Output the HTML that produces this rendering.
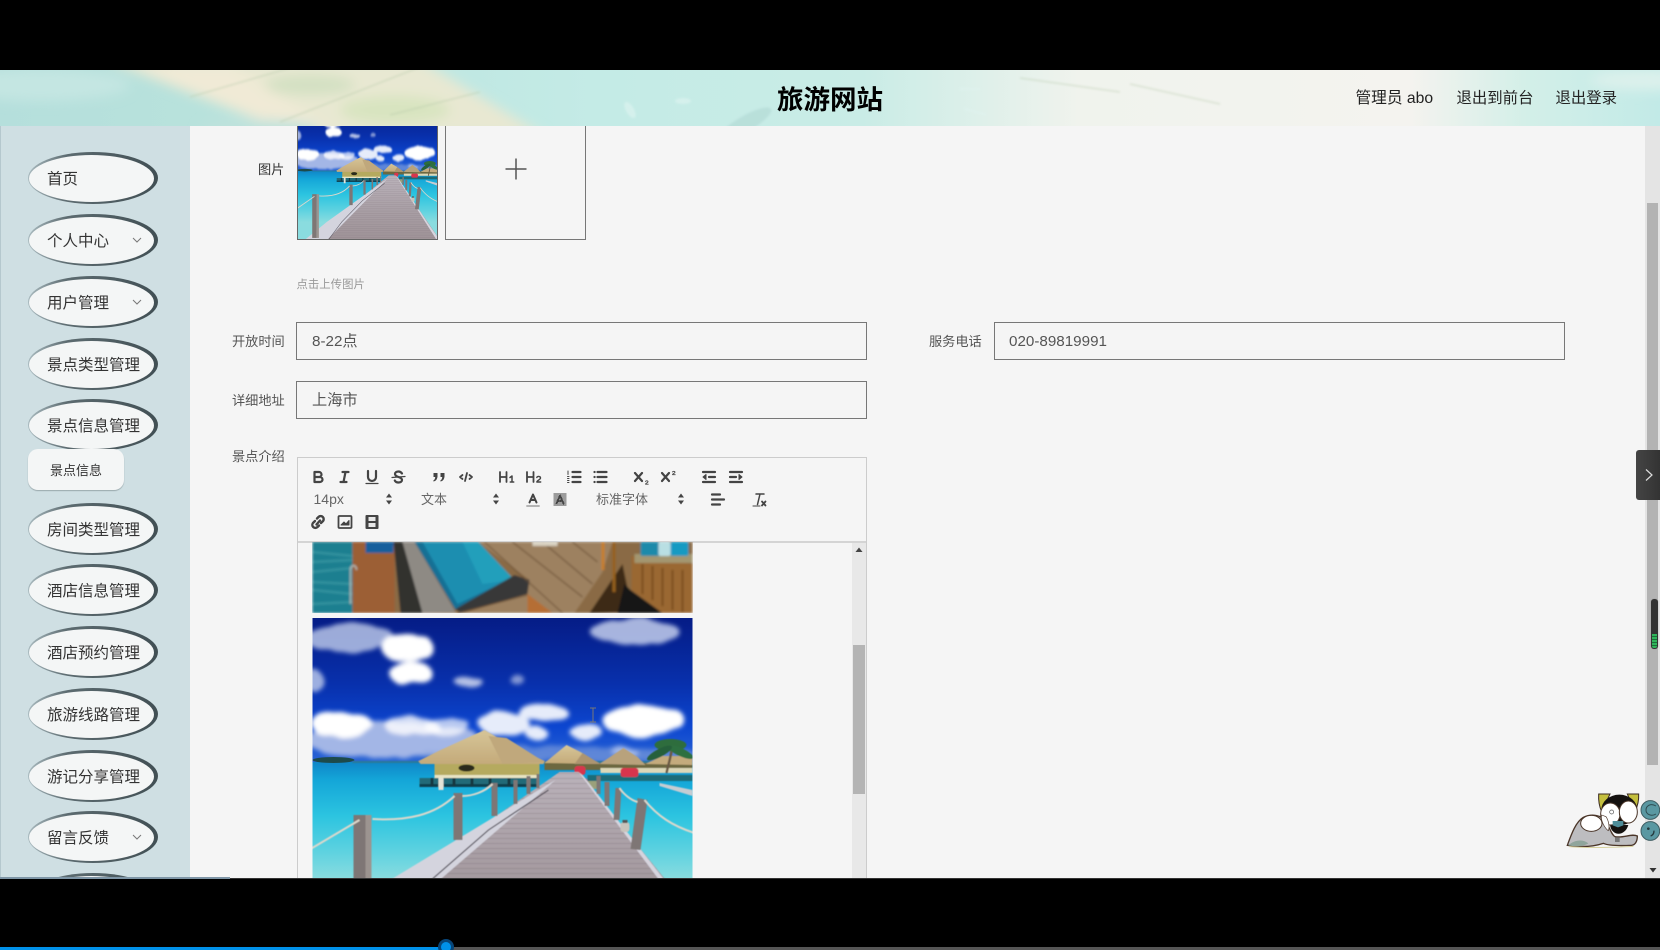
<!DOCTYPE html>
<html lang="zh">
<head>
<meta charset="utf-8">
<title>旅游网站</title>
<style>
*{box-sizing:border-box;margin:0;padding:0}
html,body{width:1660px;height:950px;overflow:hidden;background:#000}
body{position:relative;font-family:"Liberation Sans","Noto Sans CJK SC",sans-serif;color:#333}
#root{position:absolute;left:0;top:0;width:1660px;height:950px;overflow:hidden;filter:blur(.35px)}
.a{position:absolute}
.t{position:absolute;white-space:nowrap}
#sidebar{left:0;top:126px;width:190px;height:752px;background:#cfdfe3;overflow:hidden}
#main{left:190px;top:126px;width:1455px;height:752px;background:#f5f5f5}
.el{position:absolute;left:28px;width:130px;height:52px;border-radius:50%;background:linear-gradient(90deg,#a9babf 0,#5c6b70 30%,#414f54 100%)}
.el i{position:absolute;left:1px;top:2.500px;width:125px;height:47px;border-radius:50%;background:#f4f6f6}
.el span{position:absolute;left:19px;top:2px;line-height:52px;font-size:15.500px;color:#333;white-space:nowrap}
.el svg{position:absolute;left:104px;top:22px}
.lbl{position:absolute;font-size:13.200px;color:#555;text-align:right;white-space:nowrap;line-height:20px}
.inp{position:absolute;width:571px;height:38px;border:1.5px solid #777;background:#f5f5f5;font-size:15.200px;line-height:37px;padding-left:14px;color:#555;white-space:nowrap}
.tb{font-size:13px;color:#666;line-height:18px}
</style>
</head>
<body>

<svg width="0" height="0" style="position:absolute">
<defs>
<filter id="b1"><feGaussianBlur stdDeviation="0.6"/></filter>
<filter id="b2"><feGaussianBlur stdDeviation="1"/></filter>
<filter id="b6"><feGaussianBlur stdDeviation="6"/></filter>
<filter id="cl" x="-10%" y="-20%" width="120%" height="140%">
<feTurbulence type="fractalNoise" baseFrequency=".035" numOctaves="2" seed="7" result="n"/>
<feDisplacementMap in="SourceGraphic" in2="n" scale="10" xChannelSelector="R" yChannelSelector="G"/>
<feGaussianBlur stdDeviation="2.400"/>
</filter>
<linearGradient id="sky" x1="0" y1="0" x2="0" y2="1">
<stop offset="0" stop-color="#051c86"/><stop offset=".45" stop-color="#0830ac"/><stop offset=".75" stop-color="#0c46d0"/><stop offset="1" stop-color="#2c66d4"/>
</linearGradient>
<linearGradient id="sea" x1="0" y1="0" x2="0" y2="1">
<stop offset="0" stop-color="#0f86c8"/><stop offset=".1" stop-color="#14a6d8"/><stop offset=".3" stop-color="#2cc4e0"/><stop offset=".5" stop-color="#5ed2e0"/><stop offset=".65" stop-color="#8adcdf"/><stop offset="1" stop-color="#8adcdf"/>
</linearGradient>
<linearGradient id="walk" x1="0" y1="0" x2="0" y2="1">
<stop offset="0" stop-color="#bab2ba"/><stop offset=".5" stop-color="#a89ea4"/><stop offset="1" stop-color="#9c9094"/>
</linearGradient>
<linearGradient id="thatch" x1="0" y1="0" x2="0" y2="1">
<stop offset="0" stop-color="#d6c598"/><stop offset="1" stop-color="#c4aa7a"/>
</linearGradient>
<pattern id="planks" width="10" height="5" patternUnits="userSpaceOnUse">
<rect width="10" height="1" fill="#5e5058" opacity=".2"/>
</pattern>
<pattern id="dots" width="2" height="2" patternUnits="userSpaceOnUse">
<rect width="1" height="1" fill="#444"/><rect x="1" y="1" width="1" height="1" fill="#444"/>
</pattern>
<symbol id="scene" viewBox="0 0 380 320" preserveAspectRatio="none">
<rect width="380" height="146" fill="url(#sky)"/>
<rect y="144" width="380" height="180" fill="url(#sea)"/>
<g filter="url(#cl)">
<g fill="#cfdaf2">
<ellipse cx="35" cy="20" rx="45" ry="14" opacity=".75"/>
<ellipse cx="322" cy="14" rx="46" ry="13" opacity=".8"/>
<ellipse cx="2" cy="62" rx="12" ry="11" opacity=".75"/>
</g>
<g fill="#fff">
<ellipse cx="95" cy="30" rx="26" ry="15"/>
<ellipse cx="100" cy="56" rx="22" ry="11"/>
<ellipse cx="156" cy="62" rx="13" ry="5" opacity=".7"/>
<ellipse cx="206" cy="60" rx="6" ry="3.500" opacity=".5"/>
</g>
<ellipse cx="80" cy="122" rx="88" ry="18" fill="#a3b6e6"/>
<ellipse cx="250" cy="136" rx="140" ry="8" fill="#86a2dc" opacity=".6"/>
<g fill="#fff">
<ellipse cx="28" cy="106" rx="30" ry="12"/>
<ellipse cx="100" cy="108" rx="28" ry="10" opacity=".8"/>
<ellipse cx="135" cy="108" rx="22" ry="9" opacity=".7"/>
</g>
<g fill="#e6ecfa">
<ellipse cx="192" cy="106" rx="26" ry="12"/>
<ellipse cx="232" cy="95" rx="24" ry="9"/>
<ellipse cx="224" cy="115" rx="12" ry="6"/>
<ellipse cx="273" cy="114" rx="16" ry="7"/>
<ellipse cx="330" cy="103" rx="42" ry="15" fill="#fff"/>
<ellipse cx="312" cy="134" rx="14" ry="5" opacity=".5"/>
</g>
</g>
<ellipse cx="21" cy="142" rx="21" ry="3" fill="#1d4a4a"/>
<g filter="url(#b1)">
<rect y="143" x="40" width="340" height="2" fill="#2b7a9a"/>
<rect x="107" y="160" width="117" height="8" fill="#206a78"/>
<rect x="107" y="166" width="117" height="3" fill="#0f3f50"/>
<g fill="#16393f"><rect x="118" y="160" width="3" height="8"/><rect x="140" y="160" width="3" height="8"/><rect x="158" y="160" width="3" height="8"/><rect x="176" y="160" width="3" height="8"/><rect x="195" y="160" width="3" height="8"/></g>
<rect x="126" y="159" width="5" height="13" fill="#e4e4d8"/>
<rect x="122" y="145" width="105" height="14" fill="#b5aa5e"/>
<rect x="122" y="157" width="105" height="3" fill="#e8e4c4"/>
<ellipse cx="154" cy="150" rx="8" ry="3.500" fill="#2a2a1c"/>
<rect x="232" y="145" width="148" height="7" fill="#6c6840"/>
<rect x="288" y="150" width="92" height="5" fill="#dcd8b8"/>
<rect x="275" y="157" width="105" height="6" fill="#1e6c78"/>
<polygon points="347,165 380,172 380,178 347,168" fill="#c6ccd2"/>
<polygon points="172,112 128,132 106,143 108,146 231,146 232,143 200,128" fill="url(#thatch)"/>
<polygon points="194,120 232,144 190,146 176,118" fill="#c0a87c"/>
<polygon points="254,127 232,145 287,146 268,134" fill="url(#thatch)"/>
<polygon points="311,130 287,146 333,147 325,139" fill="#b8a27c"/>
<polygon points="270,135 262,146 288,146" fill="#ad9570"/>
<polygon points="333,146 350,138 380,138 380,147" fill="#c4ab7d"/>
<rect x="262" y="148" width="11" height="9" rx="3" fill="#d8354d"/>
<rect x="308" y="150" width="18" height="9" rx="3" fill="#d8354d"/>
<rect x="266" y="160" width="9" height="9" rx="3" fill="#c8324a"/>
<rect x="272" y="163" width="12" height="8" fill="#9aa07a"/>
<path d="M354 155C356 146 358 140 359 133" stroke="#6a5a44" stroke-width="2.500" fill="none"/>
<ellipse cx="358" cy="127" rx="16" ry="6" fill="#2e6d3e"/>
<ellipse cx="368" cy="134" rx="14" ry="4" fill="#2e7040" transform="rotate(25 368 134)"/>
<ellipse cx="347" cy="135" rx="14" ry="4" fill="#28603a" transform="rotate(-28 347 135)"/>
<polygon points="247,154 266,154 400,320 8,320" fill="url(#walk)"/>
<polygon points="247,154 266,154 400,320 8,320" fill="url(#planks)"/>
<polygon points="236,166 243,162 60,320 -6,320 81,260" fill="#d4d4de"/>
<path d="M236 172L176 212L121 260L68 320" stroke="#3e3a44" stroke-width="1.300" fill="none" opacity=".75"/>
<polygon points="266,154 271,158 352,262 400,320 390,320" fill="#d6d4de"/>
<g fill="#7e7674">
<rect x="41" y="197" width="12" height="100"/>
<rect x="141" y="175" width="9" height="47"/>
<rect x="179" y="165" width="6" height="33"/>
<rect x="201" y="162" width="4" height="24"/>
<rect x="214" y="158" width="4" height="18"/>
<rect x="224" y="156" width="3" height="14"/>
<polygon points="325,180 335,182 328,232 318,231"/>
<polygon points="303,170 309,170 307,202 301,202"/>
<rect x="292" y="164" width="5" height="24"/>
<rect x="284" y="158" width="4" height="18"/>
</g>
<rect x="53" y="197" width="6" height="100" fill="#9c9490"/>
<g fill="none" stroke="#dcd8cc" stroke-width="2">
<path d="M-2 231L47 202"/>
<path d="M60 201C95 203 122 197 142 178"/>
<path d="M150 178C160 178 172 174 180 166"/>
<path d="M332 182C345 198 360 208 382 215"/>
<path d="M307 170C311 176 318 182 325 184"/>
</g>
<rect x="308" y="204" width="9" height="10" rx="3" fill="#c8c4bc"/>
<rect x="310" y="202" width="5" height="3" fill="#555"/>
</g>
</symbol>
<linearGradient id="hdr" x1="0" x2="1" y1="0" y2="0">
<stop offset="0" stop-color="#b5dfdc"/><stop offset=".12" stop-color="#b8e2dc"/><stop offset=".36" stop-color="#c4ebe6"/>
<stop offset=".52" stop-color="#c9ece6"/><stop offset=".65" stop-color="#f0f3ed"/><stop offset=".85" stop-color="#f4f3ef"/>
<stop offset=".92" stop-color="#d3efe8"/><stop offset="1" stop-color="#c2eae7"/>
</linearGradient>
</defs>
</svg>

<div id="root">
<div class="a" id="sidebar"></div>
<div class="a" style="left:0;top:126px;width:1px;height:752px;background:#b5c8ce"></div>

<div class="el" style="top:152px"><i></i><span>首页</span></div>
<div class="el" style="top:214px"><i></i><span>个人中心</span><svg width="10" height="8" viewBox="0 0 10 8"><path d="M1 2L5 6L9 2" fill="none" stroke="#777" stroke-width="1"/></svg></div>
<div class="el" style="top:276px"><i></i><span>用户管理</span><svg width="10" height="8" viewBox="0 0 10 8"><path d="M1 2L5 6L9 2" fill="none" stroke="#777" stroke-width="1"/></svg></div>
<div class="el" style="top:338px"><i></i><span>景点类型管理</span></div>
<div class="el" style="top:399px"><i></i><span>景点信息管理</span></div>
<div class="a" style="left:28px;top:449px;width:96px;height:41px;background:#f4f6f6;border-radius:10px;box-shadow:0 1px 1px #99a8ac"></div>
<div class="t" style="left:50px;top:460.500px;font-size:13px;line-height:20px;color:#333">景点信息</div>
<div class="el" style="top:503px"><i></i><span>房间类型管理</span></div>
<div class="el" style="top:564px"><i></i><span>酒店信息管理</span></div>
<div class="el" style="top:626px"><i></i><span>酒店预约管理</span></div>
<div class="el" style="top:688px"><i></i><span>旅游线路管理</span></div>
<div class="el" style="top:750px"><i></i><span>游记分享管理</span></div>
<div class="el" style="top:811px"><i></i><span>留言反馈</span><svg width="10" height="8" viewBox="0 0 10 8"><path d="M1 2L5 6L9 2" fill="none" stroke="#777" stroke-width="1"/></svg></div>
<div class="el" style="top:873px"><i></i></div>

<div class="a" id="main"></div>

<!-- thumbnail -->
<svg class="a" style="left:296.500px;top:126px" width="141" height="114" viewBox="0 0 141 114">
<use href="#scene" x="0" y="-18" width="141" height="140"/>
<rect x=".5" y="-2" width="140" height="115.500" fill="none" stroke="#666"/>
</svg>
<div class="a" style="left:445px;top:120px;width:141px;height:120px;border:1.5px solid #777;background:#f5f5f5"></div>
<svg class="a" style="left:503.500px;top:156.500px" width="24" height="24" viewBox="0 0 24 24"><path d="M1.500 12H22.500M12 1.500V22.500" stroke="#555" stroke-width="1.500" fill="none"/></svg>

<div class="lbl" style="left:258px;top:160px;color:#333">图片</div>
<div class="t" style="left:296.500px;top:276.500px;font-size:11.400px;line-height:16px;color:#999">点击上传图片</div>

<div class="lbl" style="left:232px;top:332px">开放时间</div>
<div class="inp" style="left:296px;top:322px;padding-left:15px">8-22点</div>
<div class="lbl" style="left:929px;top:332px">服务电话</div>
<div class="inp" style="left:994px;top:322px">020-89819991</div>
<div class="lbl" style="left:232px;top:391px">详细地址</div>
<div class="inp" style="left:296px;top:381px;padding-left:15px">上海市</div>
<div class="lbl" style="left:232px;top:447px">景点介绍</div>

<!-- editor -->
<div class="a" style="left:297px;top:457px;width:570px;height:430px;border:1px solid #ccc;background:#f5f5f5"></div>
<div class="a" style="left:298px;top:541px;width:568px;height:1.500px;background:#d4d4d4"></div>

<svg class="a" style="left:297px;top:457px" width="570" height="85" viewBox="297 457 570 85" fill="none" stroke="#444" stroke-width="2.200" stroke-linecap="round" stroke-linejoin="round">
<g transform="translate(309.500 468)"><path d="M5 4H9.500A2.500 2.500 0 0 1 12 6.500A2.500 2.500 0 0 1 9.500 9H5ZM5 9H10.500A2.500 2.500 0 0 1 13 11.500A2.500 2.500 0 0 1 10.500 14H5Z"/></g>
<g transform="translate(335.500 468)"><path d="M7 4H13M5 14H11M10 4L8 14"/></g>
<g transform="translate(363 468)"><path d="M5 3V9A4 4 0 0 0 13 9V3"/><path d="M3 15.500H15" stroke-width="1.200"/></g>
<g transform="translate(389.500 468)"><path d="M12.500 5.500C11.500 4 10.500 3.500 9 3.500C7 3.500 5.500 4.500 5.500 6C5.500 7.500 7 8.300 9 9C11 9.700 12.500 10.500 12.500 12C12.500 13.500 11 14.500 9 14.500C7.500 14.500 6 14 5.300 12.500"/><path d="M2.500 9.500L15.500 8.500" stroke-width="1.200"/></g>
<g transform="translate(429.500 468)" fill="#444" stroke="none"><rect x="4" y="5" width="4" height="4"/><rect x="11" y="5" width="4" height="4"/><path d="M8 8C8 11 6.500 13 4 13.500L3.800 12.500C5 12 5.800 10.500 5.800 8ZM15 8C15 11 13.500 13 11 13.500L10.800 12.500C12 12 12.800 10.500 12.800 8Z"/></g>
<g transform="translate(457 468)" stroke-width="1.800"><path d="M5.500 7L3 9L5.500 11M12.500 7L15 9L12.500 11M10 5L8 13"/></g>
<g transform="translate(498 468)" stroke-width="1.800"><path d="M2 4V14M8.500 4V14M2 9H8.500"/><path d="M12 9.500L14 8V14M12.300 14H15.700" stroke-width="1.500"/></g>
<g transform="translate(525 468)" stroke-width="1.800"><path d="M2 4V14M8.500 4V14M2 9H8.500"/><path d="M11.800 9.500C12.300 8 15.500 8 15.500 10C15.500 11.500 12 12.500 11.800 14H15.700" stroke-width="1.400"/></g>
<g transform="translate(565.500 468)"><path d="M7 4H15M7 9H15M7 14H15"/><path d="M2.500 3V6.500M2 8.500H3.500M2 10.500H3.500M2 12.500H3.500M2 14.500H3.500" stroke-width="1"/></g>
<g transform="translate(591.500 468)"><path d="M6 4H15M6 9H15M6 14H15M3 4H3.100M3 9H3.100M3 14H3.100"/></g>
<g transform="translate(632 468)"><path d="M3 5L10 13M10 5L3 13"/><path d="M13.500 13.500C13.800 12.500 16 12.500 16 13.800C16 14.800 13.700 15 13.500 16.200H16.200" stroke-width=".9"/></g>
<g transform="translate(659 468)"><path d="M3 5L10 13M10 5L3 13"/><path d="M13.500 4C13.800 3 16 3 16 4.300C16 5.300 13.700 5.500 13.500 6.700H16.200" stroke-width=".9"/></g>
<g transform="translate(700 468)"><path d="M3 4H15M3 14H15M9 9H15"/><path d="M6 6.500L3 9L6 11.500Z" fill="#444" stroke-width="1"/></g>
<g transform="translate(727 468)"><path d="M3 4H15M3 14H15M3 9H9"/><path d="M12 6.500L15 9L12 11.500Z" fill="#444" stroke-width="1"/></g>

<g transform="translate(524 490.500)"><path d="M5.500 12L9 4L12.500 12M6.800 9.500H11.200" stroke-width="2"/><path d="M3 15.500H15" stroke="#aaa" stroke-width="1.800"/></g>
<g transform="translate(551 490.500)"><rect x="2.500" y="2.500" width="13" height="13" fill="url(#dots)" stroke="none"/><path d="M5.500 13L9 5L12.500 13M6.800 10.500H11.200" stroke-width="1.800"/></g>
<g transform="translate(709 490.500)"><path d="M3 4H11M3 9H15M3 14H11"/></g>
<g transform="translate(750 490.500)"><path d="M6 3.500H14M10 3.500L7.500 14" stroke-width="1.500"/><path d="M3 15.500H10" stroke-width="1.100"/><path d="M12 11L15.500 15M15.500 11L12 15" stroke-width="1.800"/></g>

<g transform="translate(309 513)" stroke-width="2.400"><path d="M7.500 11.500L11 7.500"/><path d="M8 5.500L9.500 4A3 3 0 0 1 13.800 8.300L12 10"/><path d="M10 12.500L8.500 14A3 3 0 0 1 4.200 9.700L6 8"/></g>
<g transform="translate(336 513)" stroke-width="1.800"><rect x="2.500" y="3" width="13" height="12" rx="1"/><path d="M5 12L8 9L10 11L13 7.500V12Z" fill="#444" stroke-width="1"/></g>
<g transform="translate(363 513)"><rect x="2.500" y="2" width="13" height="14" rx="1" fill="#444" stroke="none"/><rect x="5.500" y="4" width="7" height="4" fill="#e8e8e8" stroke="none"/><rect x="5.500" y="10" width="7" height="4" fill="#e8e8e8" stroke="none"/></g>
</svg>
<svg class="a" style="left:385px;top:491px" width="8" height="16"><path d="M4 2.500L7 6.500H1Z M4 13.500L7 9.500H1Z" fill="#444"/></svg>
<svg class="a" style="left:492px;top:491px" width="8" height="16"><path d="M4 2.500L7 6.500H1Z M4 13.500L7 9.500H1Z" fill="#444"/></svg>
<svg class="a" style="left:677px;top:491px" width="8" height="16"><path d="M4 2.500L7 6.500H1Z M4 13.500L7 9.500H1Z" fill="#444"/></svg>
<div class="t tb" style="left:313.500px;top:490px;font-size:14px">14px</div>
<div class="t tb" style="left:421px;top:491px">文本</div>
<div class="t tb" style="left:596px;top:491px">标准字体</div>

<!-- editor images -->
<svg class="a" style="left:312px;top:542px" width="381" height="71" viewBox="0 0 380 71">
<g filter="url(#b2)">
<rect width="380" height="71" fill="#8a6a44"/>
<rect width="42" height="71" fill="#1f7f90"/>
<path d="M0 10L40 14M0 20L40 18M0 30L40 26M0 40L40 42M0 48L40 52M0 62L40 60" stroke="#3fa0a8" stroke-width="2.500" opacity=".6"/>
<rect x="40" width="42" height="71" fill="#9c5f36"/>
<rect x="53" width="28" height="11" fill="#145f9c"/>
<path d="M38 62V28C38 22 44 22 44 28" fill="none" stroke="#b4bcb8" stroke-width="1.500"/>
<polygon points="81,0 102,0 143,70 89,71" fill="#8e8a84"/>
<polygon points="81,0 90,0 110,71 88,71" fill="#33312f"/>
<polygon points="102,0 110,0 202,36 143,68" fill="#146f94"/>
<polygon points="110,0 166,0 200,36 145,62" fill="#1a8eb0"/>
<polygon points="150,0 166,0 202,38 170,42" fill="#239fbb"/>
<polygon points="202,33 217,38 215,52 148,71 143,67" fill="#373739"/>
<polygon points="166,0 300,0 290,30 262,71 152,71 215,52 217,38" fill="#9d8160"/>
<path d="M172 0L250 71M200 0L270 55M230 0L280 42M145 71L215 53M260 0L285 20" stroke="#6e5338" stroke-width="1.500" opacity=".7"/>
<polygon points="215,52 240,71 215,71" fill="#b56e34"/>
<polygon points="277,71 310,22 320,70" fill="#3c2916"/>
<rect x="289" y="0" width="3" height="28" fill="#c87e2a"/>
<rect x="300" y="0" width="3" height="50" fill="#96601f"/>
<polygon points="319,14 380,22 380,71 350,71 319,48" fill="#9a6733"/>
<path d="M330 22V52M340 24V58M350 26V64M360 28V68M370 28V70" stroke="#6f451d" stroke-width="1.500"/>
<polygon points="312,42 318,48 350,71 305,71" fill="#141414"/>
<rect x="322" y="12" width="58" height="9" fill="#a3966f"/>
<rect x="328" width="20" height="14" rx="2" fill="#1a8aaa"/>
<rect x="346" width="12" height="14" rx="2" fill="#b9dfe3"/>
<rect x="358" width="18" height="14" rx="2" fill="#129ac2"/>
<rect x="220" y="0" width="25" height="4" fill="#d8d0bf"/>
</g>
</svg>
<svg class="a" style="left:312px;top:618px" width="381" height="260" viewBox="0 0 380 260">
<use href="#scene" x="0" y="0" width="380" height="320"/>
</svg>
<svg class="a" style="left:588px;top:707px" width="10" height="17"><path d="M2 1H8M5 1V15M2 15H8" stroke="#777" stroke-width="1" fill="none"/></svg>

<!-- editor scrollbar -->
<div class="a" style="left:852px;top:543px;width:14px;height:335px;background:#e8e8e8"></div>
<div class="a" style="left:853px;top:645px;width:12px;height:149px;background:#b4b4b4"></div>
<svg class="a" style="left:855px;top:546px" width="8" height="8"><path d="M4 1.500L7.500 6H.5Z" fill="#444"/></svg>

<!-- page scrollbar -->
<div class="a" style="left:1645px;top:126px;width:15px;height:752px;background:#e4e4e4"></div>
<div class="a" style="left:1647px;top:203px;width:11px;height:562px;background:#b3b3b3"></div>
<svg class="a" style="left:1649px;top:866px" width="8" height="8"><path d="M4 6.500L7.500 2H.5Z" fill="#333"/></svg>

<div class="a" style="left:1636px;top:450px;width:24px;height:50px;background:linear-gradient(90deg,#444 0,#3c3c3c 50%,#333 100%);border-radius:3px 0 0 3px"></div>
<svg class="a" style="left:1644px;top:468px" width="10" height="14"><path d="M2 1.500L8 7L2 12.500" fill="none" stroke="#ddd" stroke-width="1.200"/></svg>

<div class="a" style="left:1651px;top:599px;width:7px;height:50px;background:#333;border-radius:3px;box-shadow:0 0 1px #888"></div>
<div class="a" style="left:1652px;top:634px;width:5px;height:14px;background:repeating-linear-gradient(180deg,#2fb45a 0,#2fb45a 2px,#1b6e39 2px,#1b6e39 3px);border-radius:0 0 2px 2px"></div>

<!-- mascot -->
<svg class="a" style="left:1500px;top:780px" width="160" height="120" viewBox="0 1080 480 360">
<path d="M202 1276C215 1240 228 1205 250 1192C275 1180 305 1185 318 1205C330 1225 335 1245 345 1250C370 1255 395 1240 412 1248C412 1265 405 1275 395 1276C350 1278 320 1275 310 1270C280 1280 240 1282 202 1276Z" fill="#bdbdc0" stroke="#4a3528" stroke-width="4"/>
<path d="M205 1276C220 1262 245 1255 265 1270C250 1280 225 1280 205 1276Z" fill="#8fa59c"/>
<ellipse cx="274" cy="1210" rx="32" ry="24" fill="#fff" stroke="#4a3528" stroke-width="3"/>
<path d="M208 1280C260 1285 350 1282 400 1279" stroke="#d8d2a0" stroke-width="3" fill="none"/>
<path d="M296 1122L330 1122L305 1175C298 1160 295 1140 296 1122Z" fill="#c4bf3e" stroke="#3a2a20" stroke-width="3"/>
<path d="M416 1122L382 1122L405 1175C412 1160 417 1140 416 1122Z" fill="#c4bf3e" stroke="#3a2a20" stroke-width="3"/>
<ellipse cx="358" cy="1170" rx="54" ry="46" fill="#14110f"/>
<path d="M330 1215C335 1250 375 1250 385 1215Z" fill="#14110f"/>
<ellipse cx="331" cy="1182" rx="29" ry="33" fill="#fff" stroke="#4a3528" stroke-width="3"/>
<ellipse cx="385" cy="1176" rx="27" ry="33" fill="#fff" stroke="#4a3528" stroke-width="3"/>
<path d="M305 1185C300 1200 315 1225 325 1232C330 1220 325 1200 318 1190Z" fill="#fff" stroke="#4a3528" stroke-width="2"/>
<circle cx="335" cy="1176" r="6" fill="none" stroke="#555" stroke-width="2"/>
<path d="M338 1203H370V1216L354 1222L338 1216Z" fill="#4e8d99"/>
<rect x="345" y="1252" width="14" height="14" fill="#777"/>
<circle cx="451" cy="1170" r="28" fill="#5a98a2" stroke="#3f5e63" stroke-width="3"/>
<path d="M468 1158C452 1148 438 1158 438 1170C438 1184 455 1190 468 1182" fill="none" stroke="#2f4d52" stroke-width="3"/>
<circle cx="451" cy="1233" r="28" fill="#5a98a2" stroke="#3f5e63" stroke-width="3"/>
<circle cx="445" cy="1226" r="4" fill="#24383c"/>
<path d="M462 1232C462 1240 458 1246 452 1248" fill="none" stroke="#24383c" stroke-width="4"/>
</svg>

<!-- header -->
<svg class="a" style="left:0;top:70px" width="1660" height="56" viewBox="0 0 1660 56">
<rect width="1660" height="56" fill="url(#hdr)"/>
<g filter="url(#b6)">
<ellipse cx="40" cy="15" rx="90" ry="16" fill="#c4e6e2"/>
<polygon points="104,-10 420,-10 545,66 300,66" fill="#e8e8d2"/>
<polygon points="130,-5 230,-5 340,66 300,66" fill="#f0ead6"/>
<ellipse cx="310" cy="15" rx="45" ry="10" fill="#d3e0c2"/>
<ellipse cx="395" cy="40" rx="55" ry="14" fill="#d8e4c0"/>
<ellipse cx="260" cy="60" rx="60" ry="10" fill="#bfe2dc"/>
<ellipse cx="1650" cy="10" rx="60" ry="10" fill="#ddf1ec"/>
</g>
<g fill="none" stroke="#b4c8a8" stroke-width="1.500" opacity=".4" filter="url(#b2)">
<path d="M190 27L300 -5"/>
<path d="M280 52L420 -3"/>
<path d="M390 45L480 22"/>
<path d="M1020 8L1120 22"/>
<path d="M1130 14L1220 34"/>
</g>
<g fill="#a9d2cd" opacity=".45" filter="url(#b2)">
<ellipse cx="745" cy="54" rx="30" ry="8" transform="rotate(-30 745 54)"/>
</g>
<g fill="#e0f4f1" opacity=".6" filter="url(#b2)">
<ellipse cx="630" cy="40" rx="4" ry="9" transform="rotate(-30 630 40)"/>
<ellipse cx="683" cy="31" rx="8" ry="3"/>
<rect x="960" y="18" width="20" height="2"/>
<rect x="965" y="38" width="22" height="2" transform="rotate(15 965 38)"/>
</g>
</svg>
<div class="t" style="left:777px;top:79px;font-size:26.500px;line-height:38px;font-weight:700;color:#000;font-family:'Noto Sans CJK SC',sans-serif">旅游网站</div>
<div class="t" style="left:1355.500px;top:89px;font-size:15.700px;line-height:20px;color:#222">管理员 abo</div>
<div class="t" style="left:1456.500px;top:89px;font-size:15.400px;line-height:20px;color:#222">退出到前台</div>
<div class="t" style="left:1555.500px;top:89px;font-size:15.400px;line-height:20px;color:#222">退出登录</div>

<!-- bottom -->
<div class="a" style="left:0;top:878px;width:1660px;height:72px;background:#000"></div>
<div class="a" style="left:0;top:877px;width:230px;height:2px;background:#7e95a6"></div>
<div class="a" style="left:230px;top:878px;width:1430px;height:1px;background:#333"></div>
<div class="a" style="left:0;top:947px;width:1660px;height:3px;background:#555"></div>
<div class="a" style="left:0;top:947px;width:446px;height:3px;background:#0091ea"></div>
<div class="a" style="left:438px;top:939px;width:16px;height:16px;border-radius:50%;background:#0091ea;border:3px solid #07467a"></div>
</div>

</body>
</html>
